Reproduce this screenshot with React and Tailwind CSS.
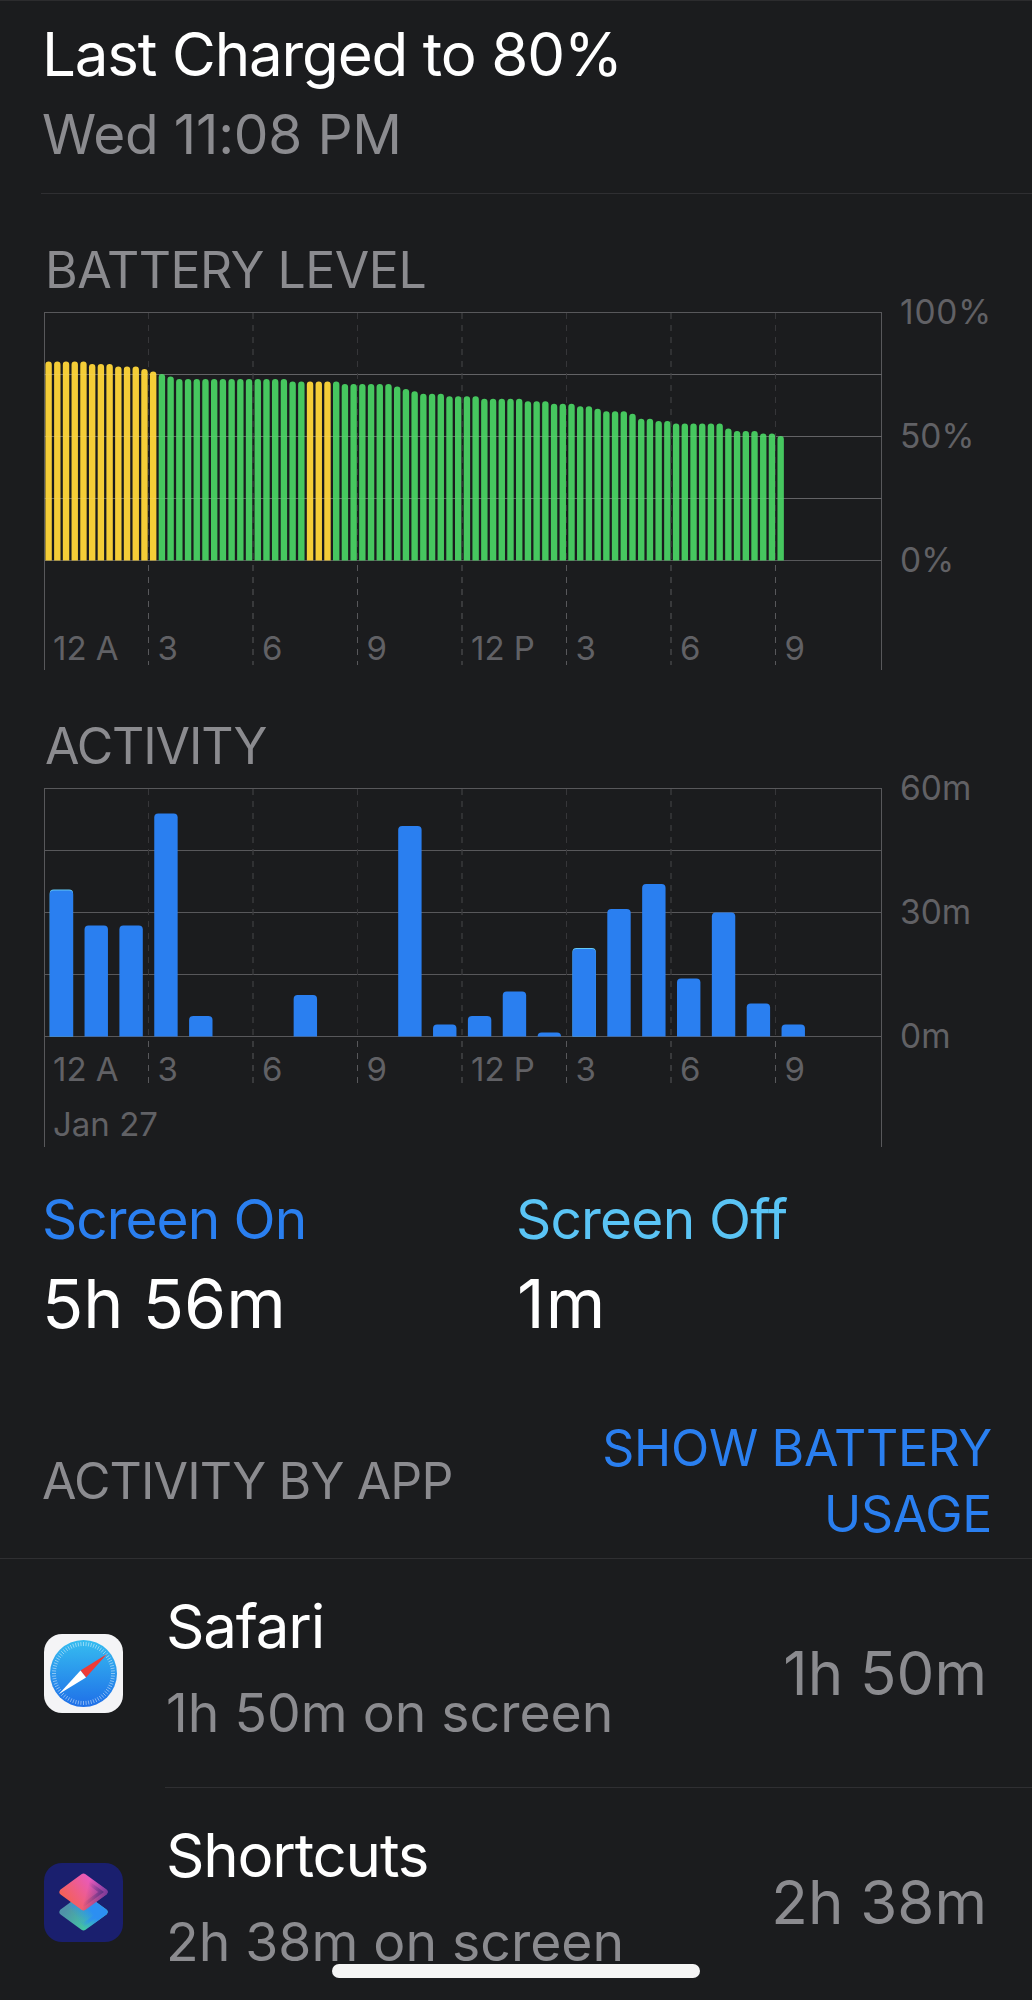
const levels = [80,80,80,80,80,79,79,79,78,78,78,77,76,75,74,73,73,73,73,73,73,73,73,73,73,73,73,73,72,72,72,72,72,72,71,71,71,71,71,71,70,69,68,67,67,67,66,66,66,66,65,65,65,65,65,64,64,64,63,63,63,62,62,61,60,60,60,59,57,57,56,56,55,55,55,55,55,55,53,52,52,52,51,51,50];
const activityTops = [890.5,925.5,925.5,813.5,1016,null,null,995,null,null,826,1024.5,1016,991.5,1032.5,949,909,884,978.5,912.5,1003.5,1024.5];
const hourLabels = ["12 A","3","6","9","12 P","3","6","9"];
const gridYs = [0.5,62.5,124.5,186.5,248.5];
const dashXs = [104.5,209,313.5,418,522.5,627,731.5];

function roundTop(x, w, top, bottom, r) {
  return `M${x} ${bottom}V${top + r}A${r} ${r} 0 0 1 ${x + r} ${top}H${x + w - r}A${r} ${r} 0 0 1 ${x + w} ${top + r}V${bottom}Z`;
}

function Frame({ height, dashEnd, children, overlayOpacity }) {
  return (
    <svg className="absolute left-0 top-0" width="960" height={height} viewBox={`0 0 960 ${height}`}>
      <line x1="0.5" x2="0.5" y1="0" y2={height} stroke="#58585b" />
      <line x1="837.5" x2="837.5" y1="0" y2={height} stroke="#58585b" />
      {gridYs.map((y) => <line key={y} x1="0" x2="838" y1={y} y2={y} stroke="#58585b" />)}
      {dashXs.map((x) => <line key={x} x1={x} x2={x} y1="1" y2={dashEnd} stroke="#58585b" strokeDasharray="6 6" />)}
      {children}
      {gridYs.slice(1, 4).map((y) => <line key={y} x1="0" x2="838" y1={y} y2={y} stroke="#ffffff" strokeOpacity={overlayOpacity} />)}
      {dashXs.map((x) => <line key={x} x1={x} x2={x} y1="1" y2="248" stroke="#1b1c1e" strokeOpacity="0.55" strokeDasharray="6 6" />)}
    </svg>
  );
}

function HourRow({ top }) {
  return (
    <div className={`absolute left-0 flex text-[33px] leading-[40px] text-[#616165] ${top}`}>
      {hourLabels.map((h, i) => <span key={i} className="w-[104.5px] pl-[9px] whitespace-nowrap">{h}</span>)}
    </div>
  );
}

function YLabel({ children, cls }) {
  return <span className={`absolute left-[856px] text-[33.5px] leading-[40px] text-[#616165] ${cls}`}>{children}</span>;
}

function BatteryChart() {
  return (
    <div className="relative ml-[44px] mt-3 h-[358px] w-[960px]">
      <Frame height={358} dashEnd={353} overlayOpacity={0.07}>
        {levels.map((l, i) => {
          const x = 1.4 + i * 8.715;
          const top = 248 - l * 2.48;
          const yellow = i < 13 || (i >= 30 && i <= 32);
          return <path key={i} d={roundTop(x, 6.4, top, 248.5, 3.2)} fill={yellow ? "#f4cd37" : "#46c75f"} />;
        })}
      </Frame>
      <YLabel cls="top-[-20px] tracking-[0.8px]">100%</YLabel>
      <YLabel cls="top-[104px]">50%</YLabel>
      <YLabel cls="top-[228px]">0%</YLabel>
      <HourRow top="top-[316px]" />
    </div>
  );
}

function ActivityChart() {
  return (
    <div className="relative ml-[44px] mt-3 h-[359px] w-[960px]">
      <Frame height={359} dashEnd={298} overlayOpacity={0}>
        {activityTops.map((t, i) => {
          if (t === null) return null;
          const x = 5.7 + i * 34.85;
          const top = t - 788;
          return (
            <g key={i}>
              {(i === 0 || i === 15) && <path d={roundTop(x, 23.4, top - 1, 248.5, 4)} fill="#63c8f5" />}
              <path d={roundTop(x, 23.4, top, 248.5, 4)} fill="#2a7ff0" />
            </g>
          );
        })}
      </Frame>
      <YLabel cls="top-[-20px]">60m</YLabel>
      <YLabel cls="top-[104px]">30m</YLabel>
      <YLabel cls="top-[228px]">0m</YLabel>
      <HourRow top="top-[261px]" />
      <span className="absolute left-[9px] top-[316px] text-[33px] leading-[40px] text-[#616165]">Jan 27</span>
    </div>
  );
}

function SafariIcon() {
  const ticks = Array.from({ length: 72 }, (_, i) => (i * Math.PI * 2) / 72);
  return (
    <svg width="79" height="79" viewBox="0 0 79 79">
      <defs>
        <linearGradient id="sf" x1="0" y1="0" x2="0" y2="1">
          <stop offset="0" stopColor="#36bdf0" />
          <stop offset="1" stopColor="#1f6fe8" />
        </linearGradient>
      </defs>
      <rect width="79" height="79" rx="18" fill="#f4f4f6" />
      <circle cx="39.5" cy="39.5" r="33.5" fill="url(#sf)" />
      {ticks.map((a, i) => (
        <line key={i} x1={39.5 + Math.cos(a) * 27.5} y1={39.5 + Math.sin(a) * 27.5} x2={39.5 + Math.cos(a) * 31.5} y2={39.5 + Math.sin(a) * 31.5} stroke="#ffffff" strokeOpacity="0.65" strokeWidth="0.7" />
      ))}
      <polygon points="63,20 36.5,36.5 42,43.5" fill="#ee3b36" />
      <polygon points="15,60 36.5,36.5 42,43.5" fill="#ffffff" />
    </svg>
  );
}

function ShortcutsIcon() {
  return (
    <svg width="79" height="79" viewBox="0 0 79 79">
      <defs>
        <linearGradient id="top" gradientUnits="userSpaceOnUse" x1="22" y1="36" x2="52" y2="14">
          <stop offset="0" stopColor="#f4605a" />
          <stop offset="1" stopColor="#e659cf" />
        </linearGradient>
        <linearGradient id="topfade" gradientUnits="userSpaceOnUse" x1="42" y1="30" x2="64" y2="36">
          <stop offset="0" stopColor="#1c1f6a" stopOpacity="0" />
          <stop offset="1" stopColor="#1c1f6a" stopOpacity="0.6" />
        </linearGradient>
        <linearGradient id="bot" gradientUnits="userSpaceOnUse" x1="24" y1="44" x2="54" y2="66">
          <stop offset="0" stopColor="#4f93a8" />
          <stop offset="1" stopColor="#3edba2" />
        </linearGradient>
        <linearGradient id="botr" gradientUnits="userSpaceOnUse" x1="36" y1="60" x2="58" y2="44">
          <stop offset="0" stopColor="#2c8ff2" stopOpacity="0" />
          <stop offset="0.6" stopColor="#2c8ff2" />
        </linearGradient>
      </defs>
      <rect width="79" height="79" rx="18" fill="#1a1f6e" />
      <path d="M39.5 34 L60 49 L39.5 64 L19 49 Z" fill="url(#bot)" stroke="url(#bot)" strokeWidth="7" strokeLinejoin="round" />
      <path d="M39.5 34 L60 49 L39.5 64 L19 49 Z" fill="url(#botr)" stroke="url(#botr)" strokeWidth="7" strokeLinejoin="round" />
      <path d="M39.5 14 L60 29 L39.5 44 L19 29 Z" fill="url(#top)" stroke="url(#top)" strokeWidth="7" strokeLinejoin="round" />
      <path d="M39.5 14 L60 29 L39.5 44 L19 29 Z" fill="url(#topfade)" stroke="url(#topfade)" strokeWidth="7" strokeLinejoin="round" />
    </svg>
  );
}

function AppRow({ icon, name, sub, time }) {
  return (
    <div className="flex">
      <div className="flex w-[165px] items-center pl-[44px]">{icon}</div>
      <div className="flex h-[229px] flex-1 items-center justify-between border-b border-[#2f2f32] pl-[1px] pr-[45px]">
        <div>
          <div className="text-[60px] leading-[80px] tracking-[-1.2px] text-white">{name}</div>
          <div className="text-[53.5px] leading-[94px] text-[#8b8b8f]">{sub}</div>
        </div>
        <div className="text-[60px] leading-[80px] text-[#8b8b8f]">{time}</div>
      </div>
    </div>
  );
}

export default function App() {
  return (
    <div className="relative h-[2000px] w-[1032px] overflow-hidden border-t border-[#2c2c2e] bg-[#1b1c1e] font-[Inter,sans-serif]">
      <header className="ml-[41px] border-b border-[#2f2f32] pb-[19px] pl-[1px] pt-[13px]">
        <h1 className="text-[60px] font-normal leading-[80px] tracking-[-1.15px] text-white">Last Charged to 80%</h1>
        <p className="text-[55px] leading-[80px] tracking-[-0.2px] text-[#8b8b8f]">Wed 11:08 PM</p>
      </header>

      <h2 className="ml-[45px] mt-[46px] text-[50px] font-normal leading-[60px] tracking-[-0.5px] text-[#8b8b8f]">BATTERY LEVEL</h2>
      <BatteryChart />

      <h2 className="ml-[45px] mt-[46px] text-[50px] font-normal leading-[60px] tracking-[-1.1px] text-[#8b8b8f]">ACTIVITY</h2>
      <ActivityChart />

      <section className="mt-10 grid grid-cols-[474px_1fr] pl-[42px]">
        <div>
          <div className="text-[55px] leading-[64px] tracking-[-1px] text-[#2a7ff0]">Screen On</div>
          <div className="mt-5 text-[68px] leading-[64px] text-white">5h 56m</div>
        </div>
        <div>
          <div className="text-[55px] leading-[64px] tracking-[-0.8px] text-[#5ac4f5]">Screen Off</div>
          <div className="mt-5 pl-px text-[68px] leading-[64px] tracking-[1px] text-white">1m</div>
        </div>
      </section>

      <div className="mt-[80px] flex items-center justify-between border-b border-[#2f2f32] pb-[11px] pl-[42px] pr-[40px]">
        <span className="text-[50px] leading-[60px] tracking-[-0.85px] text-[#8b8b8f]">ACTIVITY BY APP</span>
        <span className="w-[420px] text-right text-[50px] leading-[66px] tracking-[-0.3px] text-[#2a7ff0]">SHOW BATTERY USAGE</span>
      </div>

      <AppRow icon={<SafariIcon />} name="Safari" sub="1h 50m on screen" time="1h 50m" />
      <AppRow icon={<ShortcutsIcon />} name="Shortcuts" sub="2h 38m on screen" time="2h 38m" />

      <div className="absolute left-[332px] top-[1963px] h-[14px] w-[368px] rounded-full bg-[#f5f5f5]" />
    </div>
  );
}
